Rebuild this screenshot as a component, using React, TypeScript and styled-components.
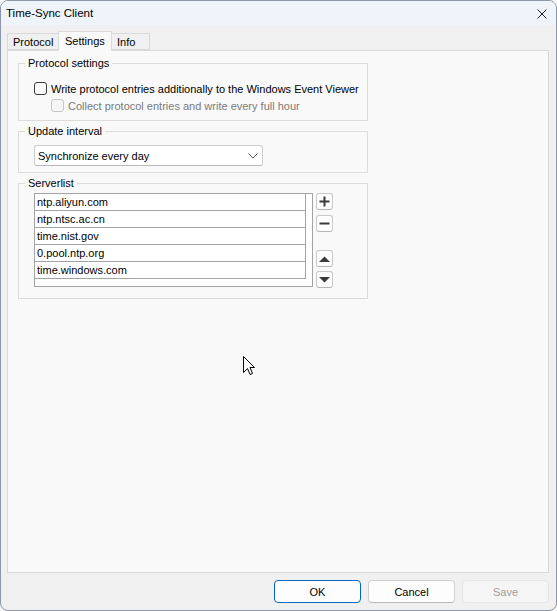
import React from "react";
import styled, { createGlobalStyle } from "styled-components";

const GlobalStyle = createGlobalStyle`
  html, body {
    margin: 0;
    padding: 0;
    background: #f3f5f8;
  }
  * { box-sizing: border-box; }
`;

const uiFont = `"Liberation Sans", Arial, sans-serif`;

const Window = styled.div`
  position: relative;
  width: 557px;
  height: 611px;
  border: 1px solid #8c96a6;
  border-radius: 8px;
  overflow: hidden;
  display: flex;
  flex-direction: column;
  font-family: ${uiFont};
  font-size: 11px;
  color: #000;
  background: #f0f0f0;
`;

const TitleBar = styled.div`
  height: 24px;
  flex: none;
  background: #eef4f9;
  display: flex;
  align-items: center;
  justify-content: space-between;
  padding: 0 9px 0 5px;
`;

const Title = styled.span`
  font-size: 11.5px;
  line-height: 16px;
`;

const CloseButton = styled.div`
  width: 10px;
  height: 10px;
  display: flex;
  margin-top: 1px;
`;

const Body = styled.div`
  flex: 1;
  display: flex;
  flex-direction: column;
  padding: 6px 7px 7px 6px;
  min-height: 0;
`;

const TabRow = styled.div`
  display: flex;
  align-items: flex-end;
  height: 19px;
  flex: none;
  position: relative;
  z-index: 1;
`;

const Tab = styled.div<{ $active?: boolean; $w: number }>`
  width: ${(p) => p.$w}px;
  height: ${(p) => (p.$active ? 20 : 17)}px;
  margin-bottom: ${(p) => (p.$active ? -1 : 0)}px;
  border: 1px solid #d9d9d9;
  border-bottom: ${(p) => (p.$active ? "none" : "1px solid #d9d9d9")};
  margin-left: -1px;
  &:first-child { margin-left: 0; }
  background: ${(p) => (p.$active ? "#f9f9f9" : "#f0f0f0")};
  display: flex;
  align-items: ${(p) => (p.$active ? "flex-start" : "center")};
  padding: ${(p) => (p.$active ? "1px 0 0 6px" : "0 0 0 5px")};
  line-height: 16px;
  white-space: nowrap;
  position: relative;
  z-index: ${(p) => (p.$active ? 2 : 1)};
`;

const Panel = styled.div`
  flex: 1;
  background: #f9f9f9;
  border: 1px solid #d9d9d9;
  padding: 4px 0 0 10px;
  display: flex;
  flex-direction: column;
  gap: 2px;
`;

const Group = styled.fieldset`
  width: 350px;
  margin: 0;
  border: 1px solid #dcdcdc;
  padding: 0;
  min-width: 0;
`;

const Legend = styled.legend`
  margin-left: 6px;
  padding: 0 3px;
  line-height: 16px;
  font-size: 11px;
`;

const GroupContent = styled.div<{ $pt: number; $pb: number }>`
  padding: ${(p) => p.$pt}px 0 ${(p) => p.$pb}px 15px;
`;

const CheckRow = styled.label<{ $indent?: number; $disabled?: boolean }>`
  display: flex;
  align-items: center;
  height: 17px;
  padding-left: ${(p) => p.$indent ?? 0}px;
  gap: 4px;
  color: ${(p) => (p.$disabled ? "#7a7a7a" : "#000")};
  line-height: 16px;
  white-space: nowrap;
`;

const CheckBox = styled.span<{ $disabled?: boolean }>`
  width: 13px;
  height: 13px;
  flex: none;
  border-radius: 3px;
  border: 1px solid ${(p) => (p.$disabled ? "#c6c6c6" : "#3b3b3b")};
  background: ${(p) => (p.$disabled ? "#f6f6f6" : "#fbfbfb")};
`;

const Combo = styled.div`
  width: 229px;
  height: 21px;
  border: 1px solid #cccccc;
  border-bottom-color: #b8b8b8;
  border-radius: 3px;
  background: #fff;
  display: flex;
  align-items: center;
  justify-content: space-between;
  padding: 0 4px 0 3px;
  line-height: 16px;
`;

const ListArea = styled.div`
  display: flex;
  gap: 3px;
`;

const ListBox = styled.div`
  width: 279px;
  height: 94px;
  border: 1px solid #a4a4a4;
  background: #fff;
`;

const ListRow = styled.div`
  width: 271px;
  height: 17px;
  border-right: 1px solid #a4a4a4;
  border-bottom: 1px solid #a4a4a4;
  padding-left: 2px;
  line-height: 16px;
  white-space: nowrap;
`;

const SideButtons = styled.div`
  display: flex;
  flex-direction: column;
  gap: 18px;
`;

const SideGroup = styled.div<{ $gap: number }>`
  display: flex;
  flex-direction: column;
  gap: ${(p) => p.$gap}px;
`;

const SmallButton = styled.div`
  width: 17px;
  height: 17px;
  border: 1px solid #c9c9c9;
  border-bottom-color: #b5b5b5;
  border-radius: 3px;
  background: #fdfdfd;
  display: flex;
  align-items: center;
  justify-content: center;
`;

const Footer = styled.div`
  display: flex;
  justify-content: flex-end;
  gap: 7px;
  padding-top: 7px;
  flex: none;
`;

const DialogButton = styled.div<{ $kind?: "default" | "normal" | "disabled" }>`
  width: 87px;
  height: 23px;
  border-radius: 4px;
  display: flex;
  align-items: center;
  justify-content: center;
  line-height: 16px;
  background: ${(p) => (p.$kind === "disabled" ? "#f5f5f5" : "#fdfdfd")};
  color: ${(p) => (p.$kind === "disabled" ? "#9d9d9d" : "#000")};
  border: 1px solid
    ${(p) =>
      p.$kind === "default" ? "#0067c0" : p.$kind === "disabled" ? "#e5e5e5" : "#d0d0d0"};
  border-bottom-color: ${(p) =>
    p.$kind === "default" ? "#0067c0" : p.$kind === "disabled" ? "#e5e5e5" : "#b7b7b7"};
`;

const Pointer = styled.svg`
  position: absolute;
  left: 241px;
  top: 354px;
  pointer-events: none;
`;

const servers = [
  "ntp.aliyun.com",
  "ntp.ntsc.ac.cn",
  "time.nist.gov",
  "0.pool.ntp.org",
  "time.windows.com",
];

const Plus = () => (
  <svg width="11" height="11" viewBox="0 0 11 11">
    <path d="M5.5 0.5v10M0.5 5.5h10" stroke="#3a3a3a" strokeWidth="2" />
  </svg>
);

const Minus = () => (
  <svg width="11" height="11" viewBox="0 0 11 11">
    <path d="M0.5 5.5h10" stroke="#3a3a3a" strokeWidth="2" />
  </svg>
);

const Up = () => (
  <svg width="11" height="6" viewBox="0 0 11 6">
    <path d="M0 6L5.5 0.5L11 6Z" fill="#3a3a3a" />
  </svg>
);

const Down = () => (
  <svg width="11" height="6" viewBox="0 0 11 6">
    <path d="M0 0L5.5 5.5L11 0Z" fill="#3a3a3a" />
  </svg>
);

export default function App() {
  return (
    <>
      <GlobalStyle />
      <Window>
        <TitleBar>
          <Title>Time-Sync Client</Title>
          <CloseButton>
            <svg width="10" height="10" viewBox="0 0 10 10">
              <path d="M0.5 0.5L9.5 9.5M9.5 0.5L0.5 9.5" stroke="#1a1a1a" strokeWidth="1" />
            </svg>
          </CloseButton>
        </TitleBar>
        <Body>
          <TabRow>
            <Tab $w={52}>Protocol</Tab>
            <Tab $w={54} $active>
              Settings
            </Tab>
            <Tab $w={39}>Info</Tab>
          </TabRow>
          <Panel>
            <Group>
              <Legend>Protocol settings</Legend>
              <GroupContent $pt={9} $pb={6}>
                <CheckRow>
                  <CheckBox />
                  Write protocol entries additionally to the Windows Event Viewer
                </CheckRow>
                <CheckRow $indent={17} $disabled>
                  <CheckBox $disabled />
                  Collect protocol entries and write every full hour
                </CheckRow>
              </GroupContent>
            </Group>
            <Group>
              <Legend>Update interval</Legend>
              <GroupContent $pt={6} $pb={6}>
                <Combo>
                  <span>Synchronize every day</span>
                  <svg width="10" height="6" viewBox="0 0 10 6">
                    <path d="M0.5 0.5L5 5L9.5 0.5" stroke="#5a5a5a" strokeWidth="1" fill="none" />
                  </svg>
                </Combo>
              </GroupContent>
            </Group>
            <Group>
              <Legend>Serverlist</Legend>
              <GroupContent $pt={2} $pb={10}>
                <ListArea>
                  <ListBox>
                    {servers.map((s) => (
                      <ListRow key={s}>{s}</ListRow>
                    ))}
                  </ListBox>
                  <SideButtons>
                    <SideGroup $gap={5}>
                      <SmallButton>
                        <Plus />
                      </SmallButton>
                      <SmallButton>
                        <Minus />
                      </SmallButton>
                    </SideGroup>
                    <SideGroup $gap={4}>
                      <SmallButton>
                        <Up />
                      </SmallButton>
                      <SmallButton>
                        <Down />
                      </SmallButton>
                    </SideGroup>
                  </SideButtons>
                </ListArea>
              </GroupContent>
            </Group>
          </Panel>
          <Footer>
            <DialogButton $kind="default">OK</DialogButton>
            <DialogButton>Cancel</DialogButton>
            <DialogButton $kind="disabled">Save</DialogButton>
          </Footer>
        </Body>
        <Pointer width="13" height="21" viewBox="0 0 13 21">
          <path
            d="M1.5 1.5V17.5L5.5 13.5L8 19.5L10.5 18.5L8 12.5H12.5Z"
            fill="#fff"
            stroke="#000"
            strokeWidth="1"
            strokeLinejoin="miter"
          />
        </Pointer>
      </Window>
    </>
  );
}
